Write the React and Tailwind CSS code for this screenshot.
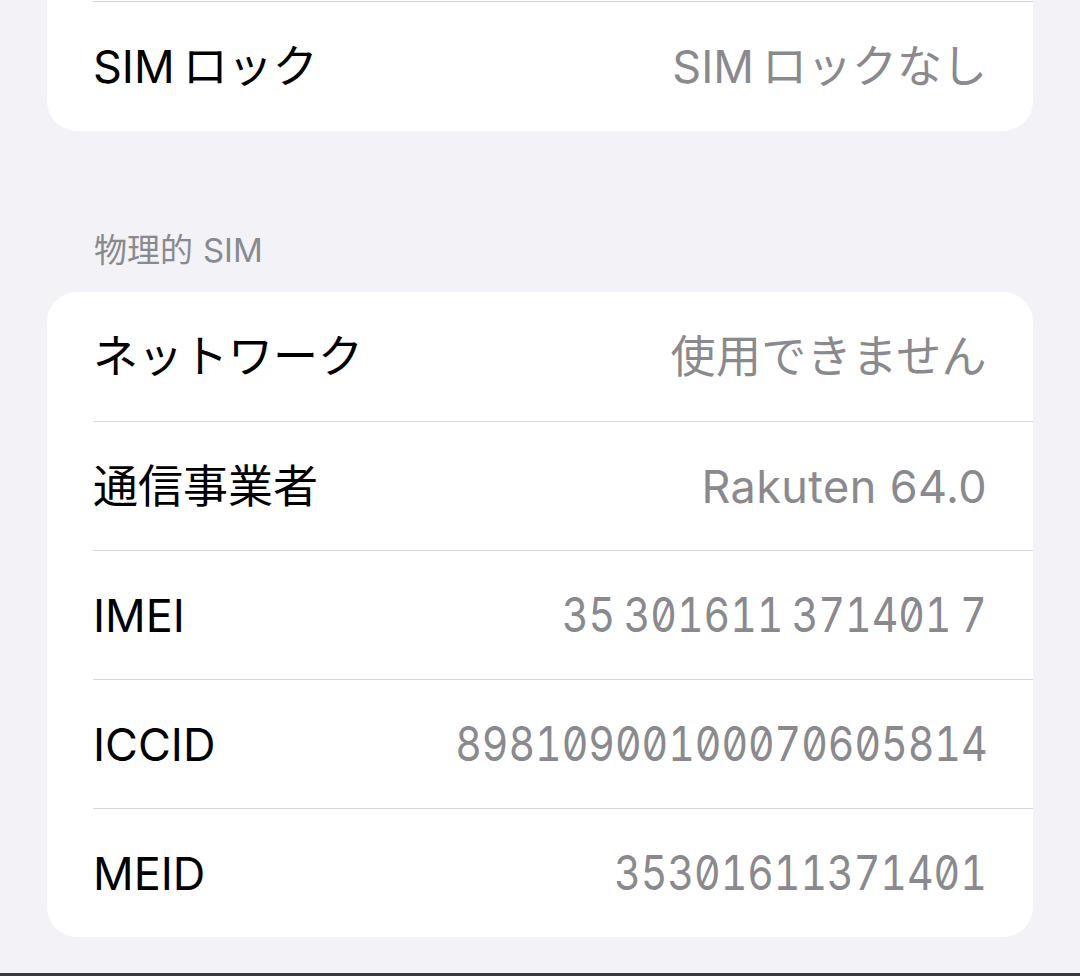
import React from 'react';

const sans = "font-['Inter','Noto_Sans_CJK_JP',sans-serif]";

// 物理的SIM の各行
const rows = [
  { label: 'ネットワーク', value: '使用できません' },
  { label: '通信事業者', value: 'Rakuten 64.0' },
  { label: 'IMEI', value: '35 301611 371401 7', mono: true },
  { label: 'ICCID', value: '89810900100070605814', mono: true },
  { label: 'MEID', value: '35301611371401', mono: true },
];

const Value = ({ children, mono }) =>
  mono ? (
    <span className="inline-block origin-right scale-x-[0.855] text-[48px] leading-none text-[#8a8a8e] slashed-zero tabular-nums [word-spacing:-3px]">
      {children}
    </span>
  ) : (
    <span className="text-[45px] leading-none tracking-[0.4px] text-[#8a8a8e]">{children}</span>
  );

const Row = ({ label, value, mono, first }) => (
  <div className="pl-[46px]">
    <div
      className={`flex h-[129px] items-center justify-between pr-[46px] ${
        first ? '' : 'border-t-[1.5px] border-[#d8d8dc]'
      }`}
    >
      <span className="text-[45px] leading-none text-black">{label}</span>
      <Value mono={mono}>{value}</Value>
    </div>
  </div>
);

export default function App() {
  return (
    <div className={`${sans} flex h-[976px] flex-col overflow-hidden bg-[#f2f2f7]`}>
      <div className="flex-1 px-[47px]">
        {/* 上のカード（上端は画面外） */}
        <div className="rounded-b-[30px] bg-white pt-px">
          <div className="pl-[46px]">
            <div className="flex h-[130px] items-center justify-between border-t-[1.5px] border-[#d1d1d6] pr-[46px]">
              <span className="text-[45px] leading-none text-black">
                SIM<span className="ml-[0.18em]">ロック</span>
              </span>
              <span className="text-[45px] leading-none text-[#8a8a8e]">
                SIM<span className="ml-[0.18em]">ロックなし</span>
              </span>
            </div>
          </div>
        </div>

        <div className="flex h-[161px] items-end pb-[25px] pl-[47px]">
          <span className="text-[33px] leading-none text-[#8a8a8e]">
            物理的<span className="ml-[0.3em]">SIM</span>
          </span>
        </div>

        <div className="overflow-hidden rounded-[30px] bg-white">
          {rows.map((r, i) => (
            <Row key={r.label} {...r} first={i === 0} />
          ))}
        </div>
      </div>
      <div className="h-[3px] bg-[#3a3a3c]" />
    </div>
  );
}
